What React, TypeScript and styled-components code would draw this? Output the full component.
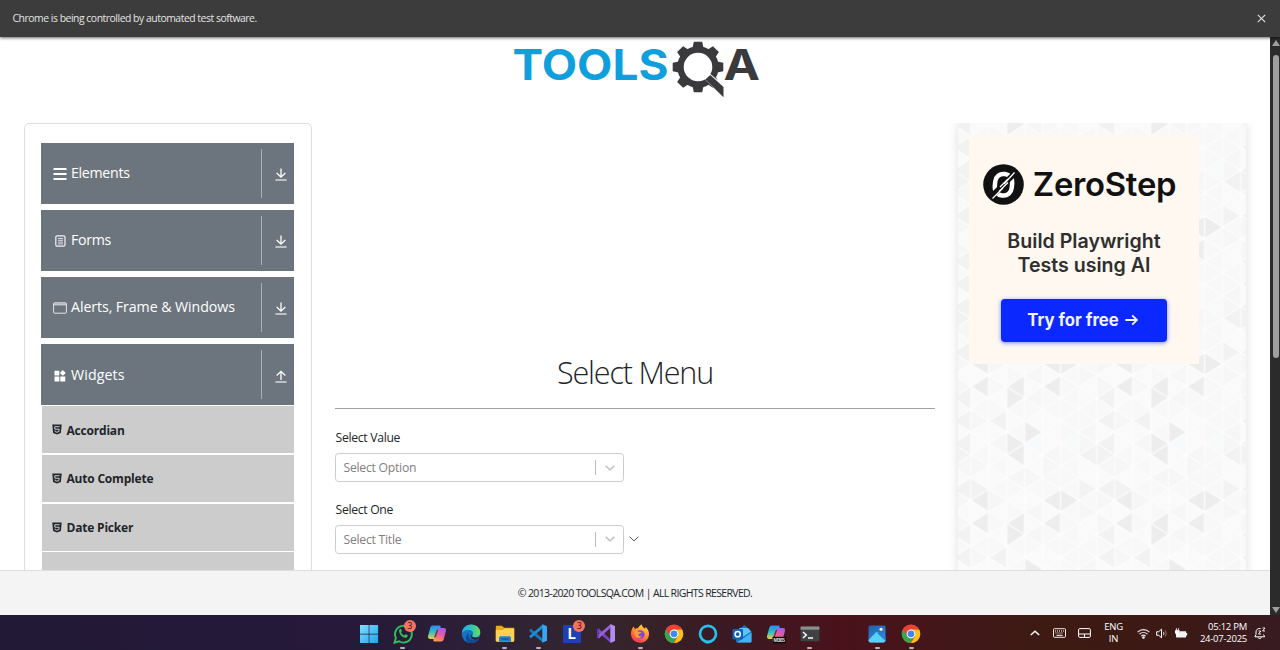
import React from 'react';
import styled, { createGlobalStyle, css } from 'styled-components';

const UI = `"Open Sans", "Noto Sans", sans-serif`;

const GlobalStyle = createGlobalStyle`
  * { box-sizing: border-box; }
  html, body { margin: 0; padding: 0; overflow: hidden; background: #fff; }
  body { font-family: ${UI}; color: #212529; }
  svg { display: block; flex: none; }
`;

const Screen = styled.div`
  width: 1280px;
  height: 650px;
  display: flex;
  flex-direction: column;
  overflow: hidden;
`;

/* ---------- browser chrome ---------- */

const InfoBar = styled.div`
  height: 37px;
  flex: none;
  background: #3c3c3c;
  color: #e4e4e4;
  display: flex;
  align-items: center;
  justify-content: space-between;
  padding: 0 14px 1px 12.5px;
  font-size: 10.4px;
  letter-spacing: -0.47px;
  box-shadow: 0 1px 3px rgba(0, 0, 0, 0.6);
  position: relative;
  z-index: 1;
`;

const Viewport = styled.div`
  flex: 1;
  min-height: 0;
  display: flex;
`;

const ScrollTrack = styled.div`
  width: 10px;
  flex: none;
  background: #2b2b2b;
  display: flex;
  flex-direction: column;
  align-items: center;
  padding: 3px 0 2px;
`;

const ScrollThumb = styled.div`
  width: 6px;
  height: 303px;
  margin: 9px 0 auto 2px;
  border-radius: 3px;
  background: #9f9f9f;
`;

const ScrollArrow = styled.div<{ $down?: boolean }>`
  width: 0;
  height: 0;
  margin-left: 2px;
  border: 4px solid transparent;
  ${p => p.$down
    ? css`border-top: 6px solid #9f9f9f; border-bottom: 0;`
    : css`border-bottom: 6px solid #9f9f9f; border-top: 0;`}
`;

/* ---------- page ---------- */

const Page = styled.div`
  flex: 1;
  min-width: 0;
  display: flex;
  flex-direction: column;
  background: #fff;
`;

const Header = styled.header`
  height: 86px;
  flex: none;
  padding: 3px 0 0 512px;
`;

const Columns = styled.div`
  flex: 1;
  min-height: 0;
  display: flex;
  overflow: hidden;
  padding: 0 24px;
  gap: 23px;
`;

const Sidebar = styled.nav`
  width: 288px;
  height: 700px;
  flex: none;
  border: 1px solid #dcdfe2;
  border-radius: 5px;
  padding: 18.6px 17px 0 16px;
`;

const Group = styled.div`
  height: 61px;
  margin-bottom: 6.2px;
  background: #6c757d;
  color: #fff;
  display: flex;
  align-items: center;
  padding-left: 11.5px;
`;

const GroupIcon = styled.span`
  width: 15px;
  margin-right: 3.5px;
  padding-top: 2px;
  display: flex;
  justify-content: center;
`;

const GroupLabel = styled.span<{ $spacing: number }>`
  flex: 1;
  font-size: 14.2px;
  letter-spacing: ${p => p.$spacing}px;
  padding-bottom: 1px;
  white-space: nowrap;
`;

const GroupToggle = styled.span`
  width: 33px;
  height: 49px;
  border-left: 1px solid #a9afb4;
  display: flex;
  align-items: center;
  justify-content: center;
  padding: 3px 0 0 6px;
`;

const SubList = styled.div`
  margin-top: -6.2px;
  padding: 1px 0.5px 0;
  display: flex;
  flex-direction: column;
  gap: 1.7px;
`;

const SubItem = styled.div`
  height: 47px;
  background: #ccc;
  display: flex;
  align-items: center;
  gap: 4.5px;
  padding: 1px 0 0 10.5px;
  font-size: 12px;
  font-weight: 700;
  letter-spacing: -0.2px;
  svg { margin-top: -1px; }
`;

const Main = styled.main`
  width: 600px;
  flex: none;
  display: flex;
  flex-direction: column;
`;

const Title = styled.h1`
  margin: 226px 0 0;
  height: 59.5px;
  border-bottom: 1px solid #a0a2a4;
  text-align: center;
  font-size: 30.5px;
  font-weight: 300;
  line-height: 47px;
  letter-spacing: -1.15px;
`;

const FieldLabel = styled.label<{ $gap: number }>`
  margin-top: ${p => p.$gap}px;
  height: 24px;
  padding-left: 0.5px;
  font-size: 12.2px;
  line-height: 18px;
  letter-spacing: -0.3px;
`;

const FieldRow = styled.div`
  display: flex;
  align-items: center;
  gap: 5px;
  color: #555;
`;

const Select = styled.div`
  width: 289px;
  height: 29.5px;
  border: 1px solid #ccc;
  border-radius: 3.5px;
  display: flex;
  align-items: center;
  padding-left: 7.5px;
  font-size: 12.2px;
  letter-spacing: -0.25px;
  color: #808080;
`;

const SelectValue = styled.span`
  flex: 1;
`;

const SelectArrow = styled.span`
  width: 28px;
  height: 15.5px;
  border-left: 1px solid #bcbcbc;
  display: flex;
  align-items: center;
  justify-content: center;
  color: #c4c4c4;
`;

const AdPanel = styled.aside`
  width: 288px;
  height: 700px;
  flex: none;
  display: grid;
  box-shadow: 0 0 10px rgba(0, 0, 0, 0.13);
  > * { grid-area: 1 / 1; }
`;

const AdCard = styled.div`
  width: 230px;
  height: 229px;
  margin: 12px 0 0 11px;
  background: #fef8f1;
  font-family: Inter, sans-serif;
  display: flex;
  flex-direction: column;
  align-items: center;
  position: relative;
`;

const Brand = styled.div`
  height: 42px;
  margin: 28px 9px 0 0;
  display: flex;
  align-items: center;
  gap: 9px;
  font-size: 32.8px;
  font-weight: 600;
  letter-spacing: -0.25px;
  color: #111;
`;

const Pitch = styled.div`
  margin-top: 23.5px;
  font-size: 19.6px;
  line-height: 24px;
  font-weight: 600;
  text-align: center;
  white-space: pre-line;
  color: #2f2f2f;
`;

const CallToAction = styled.div`
  width: 166px;
  height: 43.5px;
  margin: 22px 1px 0 0;
  padding-right: 2px;
  border-radius: 4px;
  background: #0a28ff;
  box-shadow: 0 1px 4px rgba(10, 40, 255, 0.55);
  color: #f1f3ff;
  display: flex;
  align-items: center;
  justify-content: center;
  gap: 6px;
  font-size: 16.7px;
  font-weight: 700;
`;

const Footer = styled.footer`
  height: 45.5px;
  flex: none;
  background: #f4f4f4;
  border-top: 1px solid #dedede;
  display: flex;
  align-items: center;
  justify-content: center;
  font-size: 10.5px;
  letter-spacing: -0.65px;
  position: relative;
`;

/* ---------- taskbar ---------- */

const Taskbar = styled.div`
  height: 35px;
  flex: none;
  display: flex;
  justify-content: space-between;
  padding: 0 14px 0 352px;
  color: #fff;
  background: linear-gradient(90deg, #211936 0%, #26193a 28%, #302332 42%, #35252b 48%, #3a1a23 56%, #4a121b 66%, #42171a 74%, #3d1b13 82%, #3c1915 92%, #381b22 100%);
`;

const Apps = styled.div`
  display: flex;
`;

const AppSlot = styled.div`
  width: 33.9px;
  display: flex;
  flex-direction: column;
  align-items: center;
  padding-top: 8px;
  position: relative;
`;

const Running = styled.i`
  width: 5px;
  height: 2px;
  margin-top: 3px;
  border-radius: 1px;
  background: #b9b3b8;
`;

const Badge = styled.b`
  position: absolute;
  left: 18px;
  top: 5px;
  width: 12px;
  height: 12px;
  border-radius: 50%;
  background: #f4745f;
  color: #301010;
  font-size: 9px;
  line-height: 12px;
  font-weight: 400;
  text-align: center;
`;

const Tray = styled.div`
  display: flex;
  align-items: center;
  font-size: 9.5px;
  line-height: 12.5px;
  letter-spacing: -0.25px;
  padding-top: 1px;
`;

const TrayItem = styled.div<{ $w: number; $align?: string }>`
  width: ${p => p.$w}px;
  display: flex;
  flex-direction: column;
  align-items: ${p => p.$align ?? 'center'};
  white-space: nowrap;
`;

/* ---------- drawings ---------- */

const COLS = 8;
const ROWS = 12;
const CW = 18;
const HH = 11.39;
const shades: Record<string, string> = {};
const paint = (fill: string, list: string) => list.split(' ').forEach(k => { shades[k] = fill; });
paint('#ededed', '0,0 2,0 4,0 2,1 4,10 5,10 0,10 3,4 2,5 2,6');
paint('#f2f2f2', '6,9 7,1 7,9 0,9 7,3 7,5 6,6 7,6 1,3');
paint('#f6fafa', '3,5 5,5');

const triangles: { d: string; fill: string }[] = [];
for (let c = 0; c < COLS; c++) {
  for (let r = -1; r <= ROWS; r++) {
    const row = (r + ROWS) % ROWS;
    const left = (c + row) % 2 === 0;
    const x0 = left ? c * CW : (c + 1) * CW;
    const x1 = left ? (c + 1) * CW : c * CW;
    const y = r * HH;
    const n = (c * 37 + row * 61 + c * row * 13) % 7;
    const soft = n < 2 ? '#f6f6f6' : n < 4 ? '#f8f8f8' : '#fafafa';
    triangles.push({ d: `M${x0} ${y}L${x1} ${y - HH}V${y + HH}Z`, fill: shades[`${c},${row}`] ?? soft });
  }
}

const TrianglePattern = () => (
  <svg width="288" height="700">
    <defs>
      <pattern id="tri" width={COLS * CW} height={ROWS * HH} patternUnits="userSpaceOnUse" patternTransform="translate(12.7 127)">
        {triangles.map((t, i) => <path key={i} d={t.d} fill={t.fill} stroke="#fdfdfd" strokeWidth="1" />)}
      </pattern>
    </defs>
    <rect width="288" height="700" fill="url(#tri)" />
  </svg>
);

const Logo = () => (
  <svg width="250" height="60" viewBox="512 40 250 60">
    <text x="512.500" y="80" fontFamily="Inter, sans-serif" fontWeight="700" fontSize="42" fill="#0f9fdc" textLength="156" lengthAdjust="spacingAndGlyphs">TOOLS</text>
    <g fill="#3a3a3c">
      {[0, 45, 90, 135, 180, 225, 270, 315].map(a => (
        <path key={a} d="M692.300 49l1.500-7.300h8.400l1.500 7.300z" transform={`rotate(${a} 698 67)`} />
      ))}
    </g>
    <circle cx="698" cy="67" r="17.500" fill="none" stroke="#3a3a3c" strokeWidth="6.400" />
    <path d="M702.500 77l5.500-5 18 15v13z" fill="#fff" />
    <path d="M705.300 79.500l5-4.500 13.200 12v10.300z" fill="#3a3a3c" />
    <text x="723.500" y="80" fontFamily="Inter, sans-serif" fontWeight="700" fontSize="42" fill="#3a3a3c" textLength="36.500" lengthAdjust="spacingAndGlyphs">A</text>
  </svg>
);

const ListIcon = () => (
  <svg width="14" height="12" viewBox="0 0 14 12" fill="#fff"><path d="M.5 0h13v2H.5zM.5 5h13v2H.5zM.5 10h13v2H.5z" /></svg>
);
const FormIcon = () => (
  <svg width="11" height="12" viewBox="0 0 11 12" fill="none" stroke="#f2f3f4"><rect x=".8" y=".8" width="9.200" height="10.400" rx="1.500" strokeWidth="1.200" /><path d="M3 3.500h5M3 5.300h5M3 7.100h5M3 8.900h5" strokeWidth=".8" /></svg>
);
const WindowIcon = () => (
  <svg width="14" height="12" viewBox="0 0 14 12" fill="none" stroke="#e3e5e7"><rect x=".6" y=".8" width="12.800" height="10.400" rx=".8" /><path d="M.6 2.400h12.800" strokeWidth="2" strokeOpacity=".75" /></svg>
);
const WidgetIcon = () => (
  <svg width="12" height="12" viewBox="0 0 12 12" fill="#fff"><path d="M.5.800h4.800v4.700H.5zM.5 6.500h4.800v5H.5zM6.300 6.500h5v5h-5zM8.800 0l3 2.900-3 2.900-2.900-2.900z" /></svg>
);
const ArrowIcon = ({ up }: { up?: boolean }) => (
  <svg width="12" height="13" viewBox="0 0 12 13" fill="none" stroke="#fff" strokeWidth="1.300">
    <path d={up ? 'M6 10V1.500M1.700 5.500L6 1.300l4.300 4.200' : 'M6 .500V9M1.700 5L6 9.200 10.300 5'} />
    <path d="M.4 12h11.200" strokeOpacity=".85" />
  </svg>
);
const Html5Icon = () => (
  <svg width="10" height="11" viewBox="0 0 10 11"><path d="M.3.500h9.400l-.8 8.400L5 10.400 1.100 8.900z" fill="#212529" /><path d="M7.600 2.700H2.700l.2 2.500h4.300l-.3 2.400L5 8.200l-1.900-.6-.1-1" fill="none" stroke="#ccc" strokeWidth="1" /></svg>
);
const Chevron = ({ w = 10, s = 1.6 }: { w?: number; s?: number }) => (
  <svg width={w} height="6" viewBox={`0 0 ${w} 6`} fill="none" stroke="currentColor" strokeWidth={s}><path d={`M.700.800L${w / 2} 4.900 ${w - 0.7}.800`} /></svg>
);

const ZeroMark = () => (
  <svg width="41" height="41" viewBox="0 0 41 41">
    <circle cx="20.500" cy="20.500" r="20.300" fill="#111" />
    <rect x="12" y="10" width="17" height="21.500" rx="8" fill="none" stroke="#fff" strokeWidth="4.500" transform="rotate(6 20.500 20.500)" />
    <path d="M8 33L32 9" stroke="#111" strokeWidth="5.500" />
    <path d="M9.500 34.500L20 24M21 20L31.500 8.500M17 23l8-8M16 27.500l9-9" stroke="#fff" strokeWidth="1.300" />
  </svg>
);

const I = ({ children }: { children: React.ReactNode }) => <svg width="20" height="20.500" viewBox="0 -.5 20 20.500">{children}</svg>;

const WindowsLogo = () => <I><defs><linearGradient id="win" x2="1" y2="1"><stop stopColor="#7fdcff" /><stop offset="1" stopColor="#1fa4f0" /></linearGradient></defs><path d="M1 1.500h8.700v8.700H1zM10.400 1.500h8.700v8.700h-8.700zM1 10.900h8.700v8.600H1zM10.400 10.900h8.700v8.600h-8.700z" fill="url(#win)" /></I>;
const WhatsApp = () => <I><path d="M1.500 19.200l1.400-4.800A8.400 8.400 0 1 1 6 17.800z" fill="none" stroke="#2cc35c" strokeWidth="1.900" /><path d="M6.300 6c.8-1 1.700-.8 2 0l.6 1.500-.9 1.300c.8 1.600 1.800 2.400 3.300 3.100l1.200-1.200 2 .9c.5.400.2 1.900-1 2.500-3.200 1.300-8.600-4-7.200-8.100z" fill="#2cc35c" /></I>;
const Copilot = ({ tag }: { tag?: boolean }) => (
  <I>
    <defs>
      <linearGradient id="cpa" x1=".3" x2=".3" y2="1"><stop stopColor="#2a8df0" /><stop offset=".5" stopColor="#2bc0c0" /><stop offset="1" stopColor="#f2cf3a" /></linearGradient>
      <linearGradient id="cpb" x1=".6" x2=".3" y2="1"><stop stopColor="#a45cf0" /><stop offset=".5" stopColor="#ee5a98" /><stop offset="1" stopColor="#fb9a4a" /></linearGradient>
    </defs>
    <path d="M5.500 2h6.800c1.200 0 1.700 1 1.300 2l-3 9c-.5 1.500-1.400 2.400-3 2.400H3C1 15.400.6 13.700 1.200 12l2-7.500C3.700 3 4.300 2 5.500 2z" fill="url(#cpa)" />
    <path d="M14.500 18H7.700c-1.200 0-1.700-1-1.300-2l3-9c.5-1.500 1.400-2.400 3-2.400H17c2 0 2.400 1.700 1.800 3.400l-2 7.500c-.5 1.500-1.100 2.500-2.300 2.500z" fill="url(#cpb)" />
    <path d="M9.800 6.500l1.500-.6-2.500 7.600-1.800.5z" fill="#3a2035" fillOpacity=".75" />
    {tag && <><rect x="6.500" y="13.200" width="13.500" height="6.600" rx="1" fill="#080808" /><text x="7.500" y="18.400" fontSize="4.800" fontWeight="700" fontFamily="Inter, sans-serif" fill="#ddd" textLength="11.500">M365</text></>}
  </I>
);
const Edge = () => (
  <I>
    <defs><linearGradient id="edg" x2="1"><stop stopColor="#2aa6e8" /><stop offset=".55" stopColor="#30c4b4" /><stop offset="1" stopColor="#6fe04f" /></linearGradient></defs>
    <circle cx="10" cy="10.300" r="9.300" fill="#1473c4" />
    <path d="M.7 9.500C1.500 4.300 5.500 1 10.300 1c5.500 0 9 4 9 7.800 0 3-2.200 4.900-5 4.900-2.200 0-3.400-.9-2.700-2 .9-1.500.8-5-3.300-5.300C4.700 6.200 1.600 7.600.7 9.500z" fill="url(#edg)" />
    <path d="M7.800 9.500c-1.500 4.500 2 8.300 9.600 6.400-2.300 3.300-6.500 4.300-9.500 3.400-4.300-1.400-4.200-7.800-.1-9.800z" fill="#0d4b96" />
    <path d="M11 11.500c-.8.900 0 2.300 2.600 2.600 2 .2 3.700-.5 4.600-1.200-.4 1.500-1 2.600-2 3.200-4.300 1-7.300-1.600-6.400-5z" fill="#2b2030" />
  </I>
);
const Explorer = () => <I><path d="M.8 3.500c0-.8.400-1.300 1.200-1.300h5l2 2h9c.8 0 1.200.5 1.200 1.200V17c0 .8-.4 1.200-1.200 1.200H2c-.8 0-1.200-.4-1.200-1.200z" fill="#eaa821" /><path d="M.8 6.500h7l2-1.500h9.400v12c0 .8-.4 1.200-1.200 1.200H2c-.8 0-1.200-.4-1.200-1.200z" fill="#fdd057" /><path d="M4 18.200v-3.500c0-1.500.8-2 2-2h8c1.200 0 2 .5 2 2v3.500z" fill="#1d84d0" /><path d="M6.500 15.500h7" stroke="#0b5797" strokeWidth="1.300" /></I>;
const VsCode = () => <I><path d="M1.500 6.500L3 5.300 15 15.500v3.800L1.500 7.800z" fill="#1679bd" /><path d="M1.500 13.500L3 14.700 15 4.500V.8L1.500 12.200z" fill="#1d8cd6" /><path d="M14.300.7l4.700 2v14.600l-4.700 2z" fill="#35a7f0" /></I>;
const LApp = () => <I><rect x="1" y="1.500" width="18" height="18" fill="#1f3fb4" /><text x="5.800" y="15.800" fontSize="14.500" fontWeight="700" fontFamily="Inter, sans-serif" fill="#fff">L</text></I>;
const VisualStudio = () => <I><path d="M1 6l1.800-1 12 11.300v3.200L1 7.800z" fill="#7b45c4" /><path d="M1 14l1.800 1L14.800 4V.6L1 12.200z" fill="#9361dc" /><path d="M1 5.800l1.900-.9v10.300L1 14.200z" fill="#6a38b0" /><path d="M14.300.6l4.700 2v14.800l-4.700 2z" fill="#b58af2" /></I>;
const Firefox = () => (
  <I>
    <defs><linearGradient id="ff" x1=".8" x2=".3" y2="1"><stop stopColor="#ffe14a" /><stop offset=".5" stopColor="#ff8a2a" /><stop offset="1" stopColor="#f5305c" /></linearGradient></defs>
    <path d="M3.400 3l1.700 2.400C6 4.700 7.300 4.500 8 4.600 9 2.700 10.500 1.600 11.800.7c0 2.200 1.400 3 3.200 4.600l.7-1.800c2.400 2.300 3.400 4.600 3.300 7.200-.2 5-4 8.600-9 8.600s-8.900-3.900-9-8.500C1 7.800 1.900 5 3.400 3z" fill="url(#ff)" />
    <circle cx="10.300" cy="11" r="4.300" fill="#8046d8" />
    <path d="M4 7.500c2-.8 3.500 0 4.500.8l3 .3c-.3 1.500-2.500 1.400-3 2.500-.3 1.300 1.300 2.600 3.500 1.700-1.300 2.700-6.500 2.500-7.500-1.500z" fill="#ff9a2c" />
  </I>
);
const Chrome = () => (
  <I>
    <circle cx="10" cy="10.300" r="9.300" fill="#ea4335" />
    <path d="M1.950 5.650A9.300 9.300 0 0 0 9 19.550l4.900-7L10 10.300z" fill="#33a853" />
    <path d="M10 19.600A9.300 9.300 0 0 0 18.050 5.650H10l4 7z" fill="#fbc116" />
    <path d="M1.950 5.650L6 12.600 10 6h8.050A9.300 9.300 0 0 0 1.950 5.650z" fill="#ea4335" />
    <circle cx="10" cy="10.300" r="4.400" fill="#fff" /><circle cx="10" cy="10.300" r="3.400" fill="#4285f4" />
  </I>
);
const Alexa = () => <I><circle cx="10" cy="10.300" r="8" fill="none" stroke="#25c1ec" strokeWidth="2.700" /><path d="M8 17.800l3.500-.5-1 2.700H7.700z" fill="#25c1ec" /></I>;
const Outlook = () => <I><path d="M4 8l8.500-6.500L19.500 8v9.500c0 1-.5 1.500-1.500 1.500H6c-1 0-2-.5-2-1.500z" fill="#1a6fc9" /><path d="M7.500 4.500h8.500L19 8l-7.500 5L6 9z" fill="#58c5f5" /><path d="M5 19L19.500 9v8.500c0 1-.5 1.500-1.500 1.500z" fill="#3fb4f2" /><rect x=".5" y="5.500" width="10.500" height="10.500" rx="1.300" fill="#1260b8" /><circle cx="5.700" cy="10.700" r="2.600" fill="none" stroke="#fff" strokeWidth="1.500" /></I>;
const Terminal = () => <I><rect x=".6" y="3" width="18.800" height="14.800" rx="1" fill="#3f4142" /><path d="M.6 4c0-.6.400-1 1-1h16.800c.6 0 1 .4 1 1v2.300H.6z" fill="#8b8d8f" /><path d="M3 8.500l3.300 3L3 14.500" fill="none" stroke="#fff" strokeWidth="1.500" /><path d="M8 14.500h5" stroke="#fff" strokeWidth="1.500" /></I>;
const Photos = () => <I><defs><linearGradient id="ph" x2=".6" y2="1"><stop stopColor="#215faa" /><stop offset="1" stopColor="#2d8be0" /></linearGradient></defs><rect x="1.500" y="2" width="17" height="17" rx="2" fill="url(#ph)" /><path d="M1.500 16.500l7.300-7.400c.8-.8 1.500-.8 2.300 0l7.400 7.400c-.2 1.500-.8 2.500-2 2.500h-13c-1.200 0-2-1-2-2.500z" fill="#59d0f8" /><path d="M10 9.500l8.500 8v-4l-6.200-4.600z" fill="#2f7fd6" /><circle cx="14" cy="5.700" r="1.500" fill="#fff" /></I>;

const apps: { el: React.ReactNode; run?: boolean; badge?: string }[] = [
  { el: <WindowsLogo /> },
  { el: <WhatsApp />, run: true, badge: '3' },
  { el: <Copilot /> },
  { el: <Edge /> },
  { el: <Explorer />, run: true },
  { el: <VsCode />, run: true },
  { el: <LApp />, badge: '3' },
  { el: <VisualStudio /> },
  { el: <Firefox />, run: true },
  { el: <Chrome /> },
  { el: <Alexa /> },
  { el: <Outlook /> },
  { el: <Copilot tag /> },
  { el: <Terminal />, run: true },
  { el: null },
  { el: <Photos />, run: true },
  { el: <Chrome />, run: true },
];

const KeyboardIcon = () => <svg width="13" height="10" viewBox="0 0 13 10" fill="none" stroke="#fff"><rect x=".5" y=".7" width="12" height="8.600" rx=".8" strokeWidth=".9" /><path d="M2 3h9M2.500 5h8" strokeDasharray="1 1" /><path d="M3.500 7.300h6" /></svg>;
const TouchpadIcon = () => <svg width="13" height="10" viewBox="0 0 13 10" fill="none" stroke="#fff"><rect x=".6" y=".6" width="11.800" height="8.800" rx="1.200" /><path d="M.6 6h11.800M6.500 6v3.400" /></svg>;
const WifiIcon = () => <svg width="13" height="11" viewBox="0 0 13 11" fill="none" stroke="#eee" strokeWidth="1.100"><path d="M.6 4.200c3.300-3.400 8.500-3.400 11.800 0M2.500 6.200c2.300-2.300 5.700-2.300 8 0M4.300 8.100c1.300-1.200 3.100-1.200 4.400 0" /><circle cx="6.500" cy="9.500" r=".8" fill="#fff" /></svg>;
const VolumeIcon = () => <svg width="12" height="11" viewBox="0 0 12 11" fill="none" stroke="#fff"><path d="M.7 3.700h2L5.500 1.200v8.600L2.700 7.300h-2z" /><path d="M7.300 3.800c.8 1 .8 2.400 0 3.400" /><path d="M9 2.500c1.600 1.800 1.600 4.200 0 6" strokeOpacity=".4" /></svg>;
const BatteryIcon = () => <svg width="14" height="11" viewBox="0 0 14 11"><path d="M5.500 3.200h5.700c.6 0 1 .4 1 1V5h1v2.600h-1v1c0 .6-.4 1-1 1H3c-.8 0-1-.4-1-1V5h3.500z" fill="#f3f3f3" /><path d="M1 2.300h4.600v2.200c0 1.300-.8 2-2.300 2S1 5.800 1 4.500zM1.900.300h.9v2h-.9zM3.900.300h.9v2h-.9z" fill="#fff" /></svg>;
const BellIcon = () => <svg width="12" height="13" viewBox="0 0 12 13" fill="none" stroke="#fff" strokeWidth="1"><path d="M6.500 1.500C3.500 1 2 3 2 5v2.500L.8 9.800h9.900L9.500 7.500M4 10.300c.4 1.700 3 1.700 3.400 0" /><path d="M4.500 4h2.300L4.500 7h2.500M8.500 1h2.500L8.500 4H11" strokeWidth=".9" /></svg>;

const groups = [
  { label: 'Elements', icon: <ListIcon />, spacing: -0.3 },
  { label: 'Forms', icon: <FormIcon />, spacing: -0.3 },
  { label: 'Alerts, Frame & Windows', icon: <WindowIcon />, spacing: -0.08 },
  { label: 'Widgets', icon: <WidgetIcon />, spacing: 0.1, open: true },
];

const subItems = ['Accordian', 'Auto Complete', 'Date Picker', ''];

export default function App() {
  return (
    <Screen>
      <GlobalStyle />
      <InfoBar>
        <span>Chrome is being controlled by automated test software.</span>
        <svg width="9" height="9" viewBox="0 0 9 9" stroke="#ddd" strokeWidth="1.200"><path d="M.8.800l7.400 7.400M8.200.800L.8 8.200" /></svg>
      </InfoBar>
      <Viewport>
        <Page>
          <Header><Logo /></Header>
          <Columns>
            <Sidebar>
              {groups.map(g => (
                <Group key={g.label}>
                  <GroupIcon>{g.icon}</GroupIcon>
                  <GroupLabel $spacing={g.spacing}>{g.label}</GroupLabel>
                  <GroupToggle><ArrowIcon up={g.open} /></GroupToggle>
                </Group>
              ))}
              <SubList>
                {subItems.map((label, i) => (
                  <SubItem key={i}>{label && <Html5Icon />}{label}</SubItem>
                ))}
              </SubList>
            </Sidebar>
            <Main>
              <Title>Select Menu</Title>
              <FieldLabel $gap={20.3}>Select Value</FieldLabel>
              <FieldRow>
                <Select><SelectValue>Select Option</SelectValue><SelectArrow><Chevron /></SelectArrow></Select>
              </FieldRow>
              <FieldLabel $gap={18.4}>Select One</FieldLabel>
              <FieldRow>
                <Select><SelectValue>Select Title</SelectValue><SelectArrow><Chevron /></SelectArrow></Select>
                <Chevron s={1} />
              </FieldRow>
            </Main>
            <AdPanel>
              <TrianglePattern />
              <AdCard>
                <Brand><ZeroMark />ZeroStep</Brand>
                <Pitch>{'Build Playwright\nTests using AI'}</Pitch>
                <CallToAction>
                  Try for free
                  <svg width="13" height="12" viewBox="0 0 13 12" fill="none" stroke="#f1f3ff" strokeWidth="1.800"><path d="M.3 6h11.500M7.200 1.300L11.900 6l-4.700 4.700" /></svg>
                </CallToAction>
              </AdCard>
            </AdPanel>
          </Columns>
          <Footer>© 2013-2020 TOOLSQA.COM | ALL RIGHTS RESERVED.</Footer>
        </Page>
        <ScrollTrack>
          <ScrollArrow />
          <ScrollThumb />
          <ScrollArrow $down />
        </ScrollTrack>
      </Viewport>
      <Taskbar>
        <Apps>
          {apps.map((a, i) => (
            <AppSlot key={i}>
              {a.el}
              {a.badge && <Badge>{a.badge}</Badge>}
              {a.run && <Running />}
            </AppSlot>
          ))}
        </Apps>
        <Tray>
          <TrayItem $w={24}><svg width="10" height="6" viewBox="0 0 10 6" fill="none" stroke="#fff" strokeWidth="1.400"><path d="M.8 5L5 1.200 9.200 5" /></svg></TrayItem>
          <TrayItem $w={25}><KeyboardIcon /></TrayItem>
          <TrayItem $w={24}><TouchpadIcon /></TrayItem>
          <TrayItem $w={35}><span>ENG</span><span>IN</span></TrayItem>
          <TrayItem $w={24}><WifiIcon /></TrayItem>
          <TrayItem $w={13}><VolumeIcon /></TrayItem>
          <TrayItem $w={26}><BatteryIcon /></TrayItem>
          <TrayItem $w={53} $align="flex-end"><span>05:12 PM</span><span>24-07-2025</span></TrayItem>
          <TrayItem $w={19} $align="flex-end"><BellIcon /></TrayItem>
        </Tray>
      </Taskbar>
    </Screen>
  );
}
